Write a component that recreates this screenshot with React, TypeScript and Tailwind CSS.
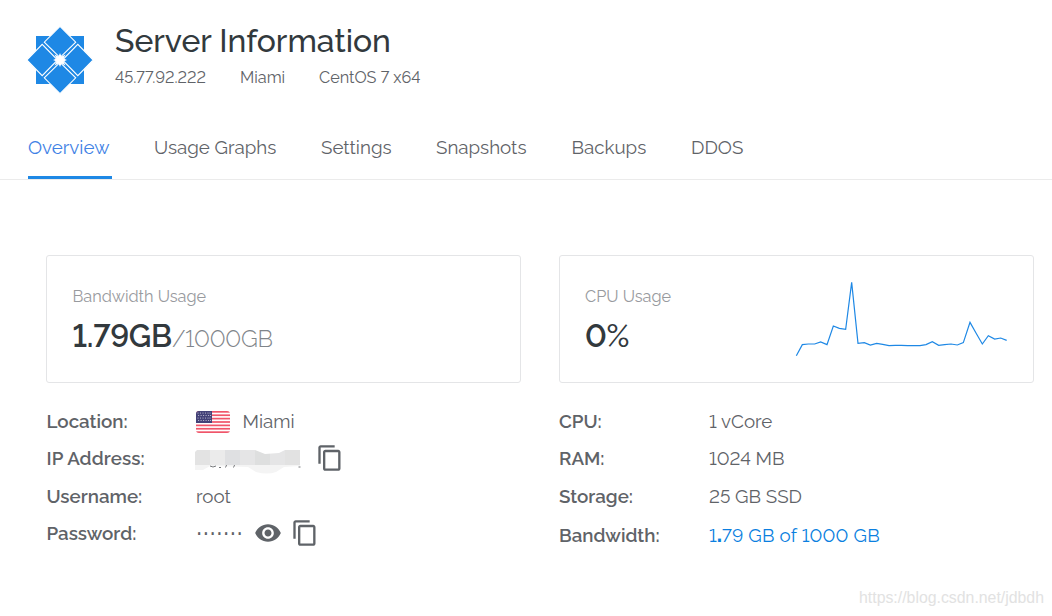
import type { ReactNode } from "react";
import { MdContentCopy, MdVisibility } from "react-icons/md";

const tabs = [
  { name: "Overview", box: "w-[84px]" },
  { name: "Usage Graphs", box: "w-[125px]" },
  { name: "Settings", box: "w-[73px]" },
  { name: "Snapshots", box: "w-[93.5px]" },
  { name: "Backups", box: "w-[77.5px]" },
  { name: "DDOS", box: "w-[60px]" },
];

const cpuPoints =
  "49,317 67,284 85,282 104,282 122,276 141,284 160,228 178,235 197,238 215,97 234,280 253,278 271,285 290,280 308,283 327,287 346,286 364,286 383,287 401,287 420,287 438,284 457,275 476,286 494,284 513,282 532,285 550,278 570,217 588,249 607,282 625,257 644,267 662,264 680,271";

function CentosLogo() {
  return (
    <svg width="66" height="68" viewBox="0 0 66 68" className="shrink-0">
      <rect x="9" y="10" width="48" height="48" fill="#1e88e5" />
      <g fill="#1e88e5" stroke="#fff" strokeWidth="1.1">
        <path d="M33 .3 48.700 16.200 33 31.600 17.300 16.200z" />
        <path d="M33 36.400 48.700 51.800 33 67.700 17.300 51.800z" />
        <path d="M-.2 34 15.200 18.300 30.600 34 15.200 49.700z" />
        <path d="M66.200 34 50.800 18.300 35.400 34 50.800 49.700z" />
      </g>
      <path d="M33 27l1.500 3.500 4-2-2 4L40 34l-3.500 1.500 2 4-4-2L33 41l-1.500-3.500-4 2 2-4L26 34l3.500-1.500-2-4 4 2z" fill="#fff" />
    </svg>
  );
}

function UsFlag() {
  return (
    <svg width="34" height="22" viewBox="0 0 34 22" className="shrink-0 overflow-hidden rounded-[3px]">
      <rect width="34" height="22" fill="#fff" />
      {[0, 2, 4, 6, 8, 10, 12].map((i) => (
        <rect key={i} y={(i * 22) / 13} width="34" height={22 / 13} fill="#f0556a" />
      ))}
      <rect width="16" height="12" fill="#444278" />
      {[2, 4.5, 7, 9.5].map((y, r) =>
        [2, 4.5, 7, 9.5, 12, 14].map((x) => (
          <circle key={x + "-" + y} cx={x + (r % 2 ? 0.6 : 0)} cy={y} r="0.6" fill="#c9c7da" />
        )),
      )}
    </svg>
  );
}

function MaskedAddress() {
  const tones = ["#e3e3e3", "#ebebeb", "#dfe0e2", "#e5e5e6", "#dedfdf", "#e5e5e6", "#e2e2e2"];
  return (
    <svg width="107" height="26" viewBox="0 0 107 26" className="shrink-0">
      <path d="M0 16h105v2l-16 1-8 5q-9 3-20 0l-8-5-38-1-7 4H0z" fill="#f4f4f4" />
      <path d="M15 18q3 2 6 0M24 19.500h2M32 16l-1.500 3.500M40 16l-1.500 3.500M103.500 19h2" stroke="#77797c" fill="none" />
      <clipPath id="mask"><path d="M2 2h58l10 4 14-1 6-3h15v15H0V4z" /></clipPath>
      <g clipPath="url(#mask)">
        {tones.map((t, i) => (
          <rect key={i} x={i * 15} y="0" width="15" height="17" fill={t} />
        ))}
      </g>
    </svg>
  );
}

function Row({ label, h, nudge = "", children }: { label: string; h: string; nudge?: string; children: ReactNode }) {
  return (
    <div className={"flex items-center " + h}>
      <div className={"w-[150px] shrink-0 font-semibold leading-6 " + nudge}>{label}</div>
      {children}
    </div>
  );
}

export default function App() {
  return (
    <div className="flex h-[616px] w-[1052px] flex-col overflow-hidden bg-white font-['Raleway','Lato',sans-serif] text-[18.75px] font-normal lining-nums text-[#5f6368]">
      <header className="flex h-[135px] pl-[27px] pt-[22px]">
        <div className="pt-[4px]"><CentosLogo /></div>
        <div className="pl-[22px]">
          <h1 className="whitespace-nowrap pt-px text-[31.9px] font-medium leading-9 text-[#32393d]">Server Information</h1>
          <div className="mt-[9px] flex whitespace-nowrap text-[16.25px] leading-5">
            <span className="w-[125px]">45.77.92.222</span>
            <span className="w-[79px]">Miami</span>
            <span>CentOS 7 x64</span>
          </div>
        </div>
      </header>

      <nav className="flex h-[45px] gap-[42px] border-b border-[#ebebeb] pl-7">
        {tabs.map((t, i) => (
          <a
            key={t.name}
            className={
              "h-[44px] whitespace-nowrap leading-6 " + t.box +
              (i === 0 ? " border-b-3 border-[#1e88e5] text-[#3f82e5]" : "")
            }
          >
            {t.name}
          </a>
        ))}
      </nav>

      <main className="grid grid-cols-[475px_475px] gap-x-[38px] pl-[46px] pt-[75px]">
        <section className="h-32 rounded-[3px] border border-[#e4e5e7] pl-[25.5px] pt-[31px]">
          <div className="text-[16.25px] leading-5 text-[#989a9e]">Bandwidth Usage</div>
          <div className="mt-[11px] flex items-baseline leading-9">
            <span className="text-[31.25px] font-semibold tracking-[-0.22px] text-[#32393d]">1.79GB</span>
            <span className="text-[23.4px] font-light leading-9 tracking-[-0.25px] text-[#7f858a]">/1000GB</span>
          </div>
        </section>
        <section className="flex h-32 justify-between rounded-[3px] border border-[#e4e5e7] pl-[25px] pr-[23px]">
          <div className="pt-[31px]">
            <div className="text-[16.25px] leading-5 text-[#989a9e]">CPU Usage</div>
            <div className="mt-[11px] text-[31.25px] leading-9 tracking-[-0.3px] text-[#32393d]">
              <span className="font-semibold">0</span><span className="font-medium">%</span>
            </div>
          </div>
          <svg width="220" height="80" viewBox="30 90 660 240" className="mt-6">
            <polyline points={cpuPoints} fill="none" stroke="#1e88e5" strokeWidth="3.6" />
          </svg>
        </section>

        <div className="pt-5">
          <Row label="Location:" h="h-[37px]" nudge="pb-[2px] pl-[0.5px]">
            <UsFlag />
            <span className="pl-[12.5px]">Miami</span>
          </Row>
          <Row label="IP Address:" h="h-[37px]" nudge="pb-[2px] pl-[0.5px] tracking-[0.1px]">
            <div className="-ml-px pt-1"><MaskedAddress /></div>
            <MdContentCopy className="-mt-px ml-[14px] size-7 shrink-0" />
          </Row>
          <Row label="Username:" h="h-[38px]" nudge="pl-[0.5px]">
            <span>root</span>
          </Row>
          <Row label="Password:" h="h-[37px]" nudge="pb-[2px] pl-[0.5px]">
            <span className="w-[58px] pl-px font-bold tracking-[2.55px]">·······</span>
            <MdVisibility className="-mt-px size-7 shrink-0" />
            <MdContentCopy className="-mt-px ml-[9px] size-7 shrink-0" />
          </Row>
        </div>
        <div className="pt-5">
          <Row label="CPU:" h="h-[37px]" nudge="pb-[2px]"><span>1 vCore</span></Row>
          <Row label="RAM:" h="h-[37px]" nudge="pb-[2px]"><span>1024 MB</span></Row>
          <Row label="Storage:" h="h-[38px]"><span>25 GB SSD</span></Row>
          <Row label="Bandwidth:" h="h-[39px]">
            <span className="pt-px tracking-[0.18px] text-[#0b7fe0]">1<b className="font-black">.</b>79 GB of 1000 GB</span>
          </Row>
        </div>
      </main>

      <footer className="mt-auto flex justify-end pb-2 pr-2 font-['Liberation_Sans',sans-serif] text-[15.85px] font-normal leading-5 text-[#e2e2e2]">
        https://blog.csdn.net/jdbdh
      </footer>
    </div>
  );
}
